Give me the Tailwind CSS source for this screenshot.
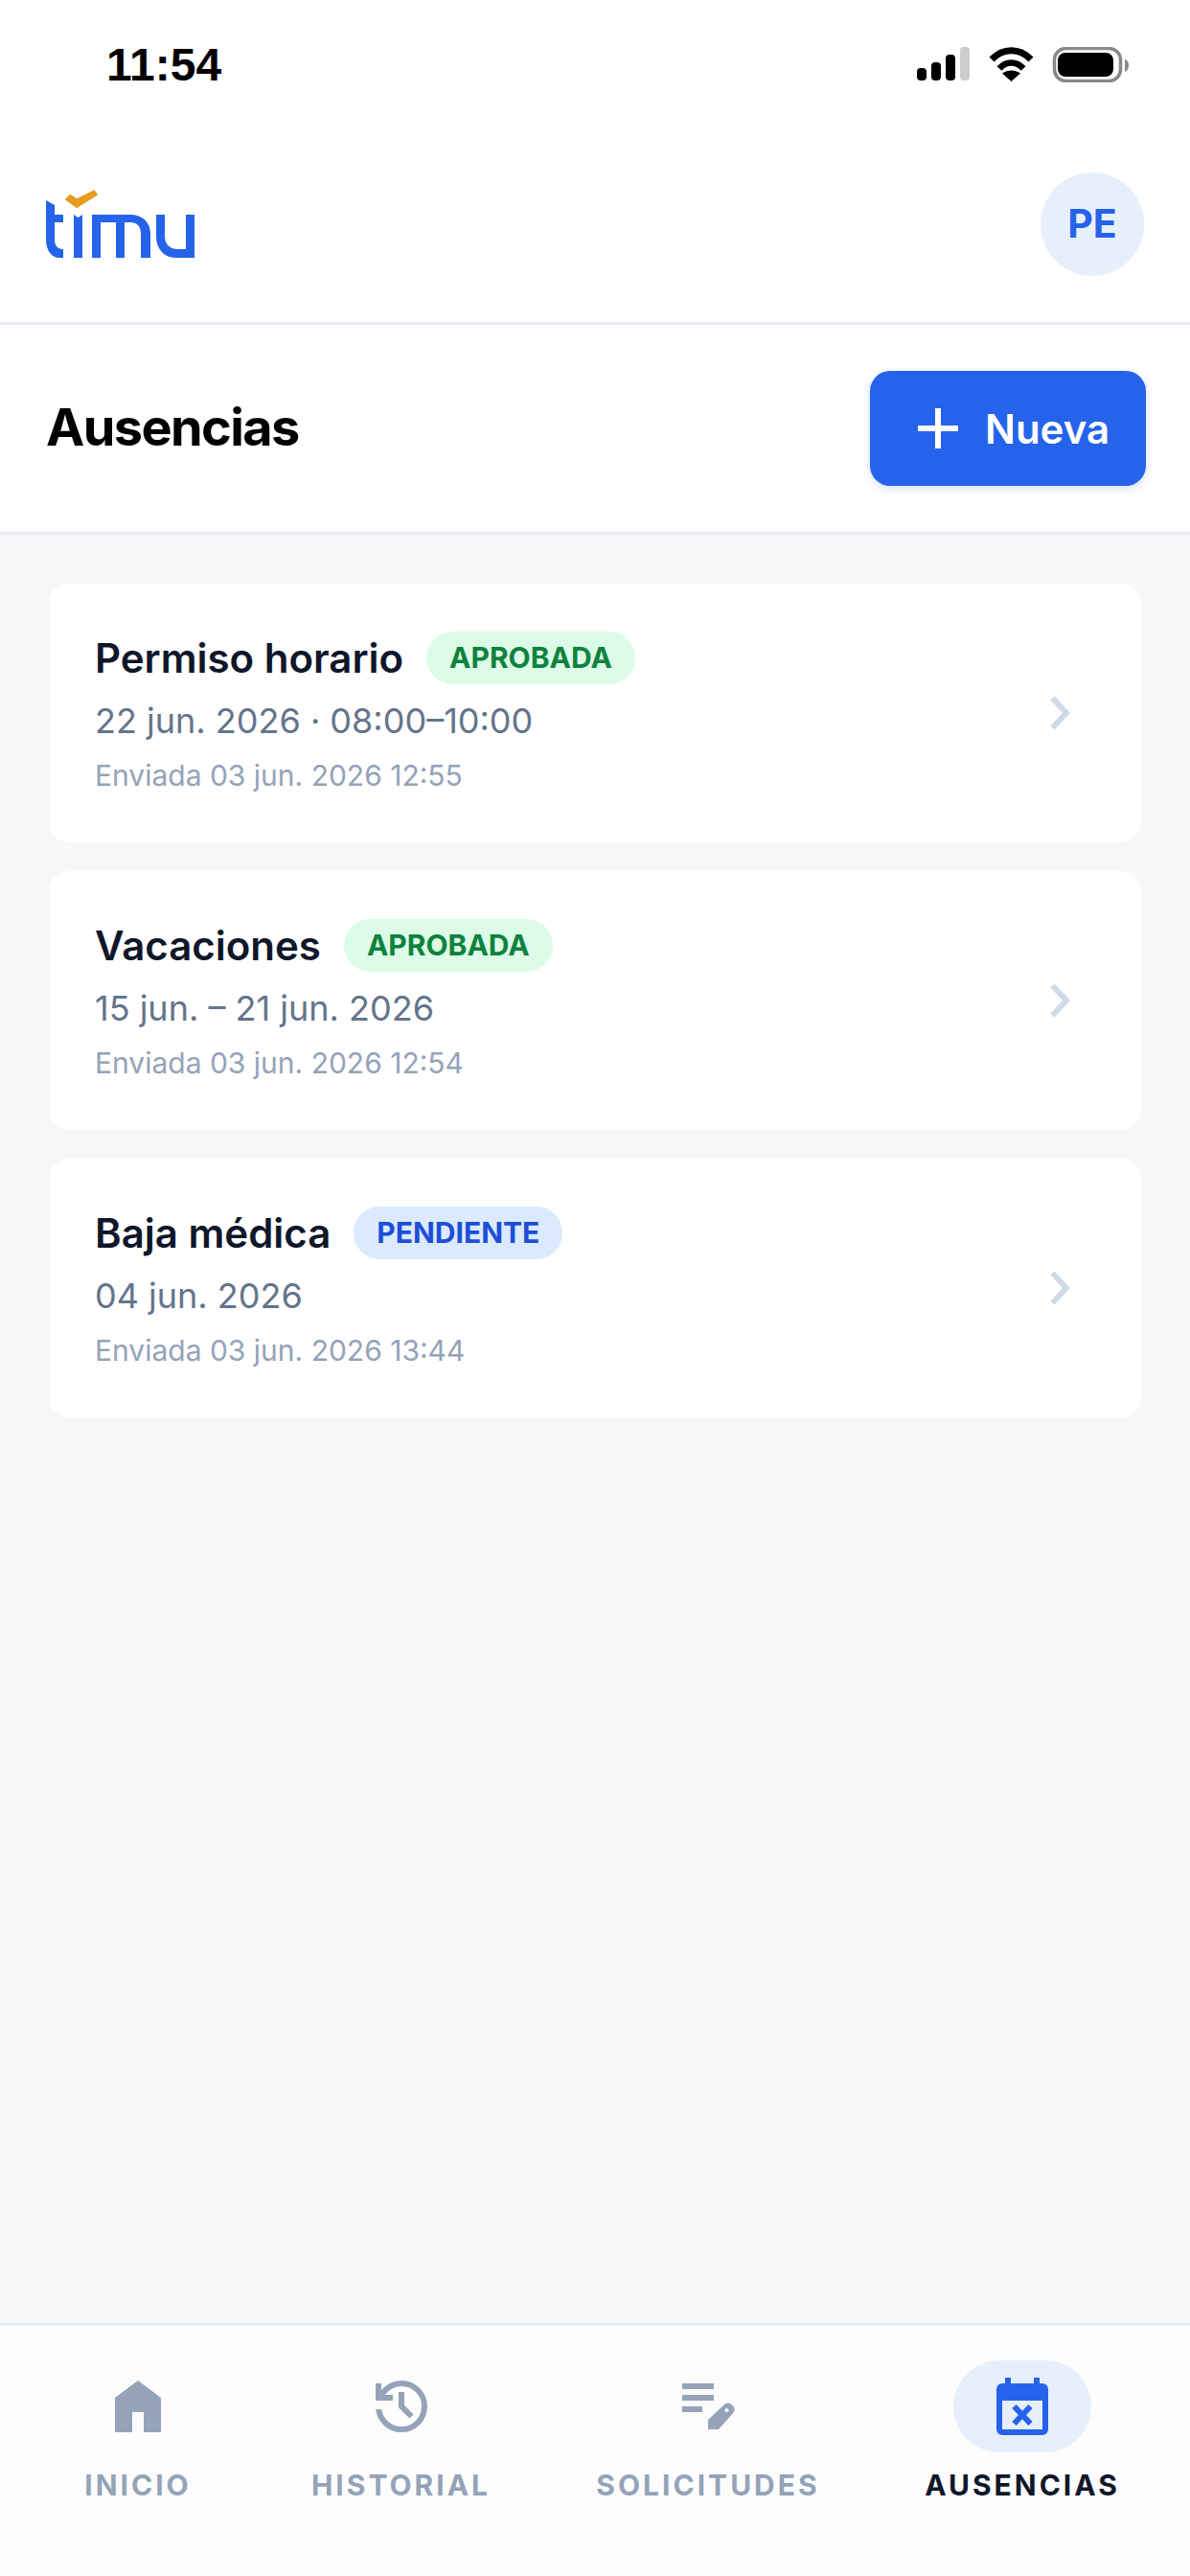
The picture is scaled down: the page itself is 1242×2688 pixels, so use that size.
<!DOCTYPE html>
<html lang="en">
  <head>
    <meta charset="UTF-8" />
    <meta name="viewport" content="width=device-width, initial-scale=1.0" />
    <title>Ausencias</title>
    <script src="https://cdn.jsdelivr.net/npm/@tailwindcss/browser@4"></script>
  </head>
  <body class="bg-[#f6f7f9] font-['Inter',sans-serif]">
    <div class="w-[1242px] h-[2688px] flex flex-col overflow-hidden">
      <!-- status bar -->
      <div class="h-[136px] bg-white flex justify-between pl-[111px] pr-[64px] pt-[40px] shrink-0">
        <span class="font-['Liberation_Sans',sans-serif] font-bold text-[48px] leading-[56px] text-black">11:54</span>
        <svg class="mt-[9px]" width="221" height="37" viewBox="0 0 221 37">
          <rect x="0" y="22" width="10" height="13" rx="4" fill="#000" />
          <rect x="15" y="16" width="10" height="19" rx="4" fill="#000" />
          <rect x="30" y="8" width="10" height="27" rx="4" fill="#000" />
          <rect x="45" y="0" width="10" height="35" rx="4" fill="#ccc" />
          <path d="M78 13 C90 0.500 107 0.500 119 13" fill="none" stroke="#000" stroke-width="7" />
          <path d="M86 22.500 C93 14.500 104 14.500 111 22.500" fill="none" stroke="#000" stroke-width="6.500" />
          <path d="M98.500 36 L89 27.500 C95 23.500 102 23.500 108 27.500 Z" fill="#000" />
          <rect x="143.500" y="1.500" width="69" height="34" rx="12" fill="none" stroke="#888" stroke-width="3.500" />
          <rect x="147" y="6" width="58" height="25" rx="8" fill="#000" />
          <path d="M217 13 C220 14 221 16 221 19 C221 22 220 25 217 26 Z" fill="#888" />
        </svg>
      </div>

      <!-- top bar -->
      <div class="h-[203px] bg-white border-b-[3px] border-[#e7ebf2] flex items-center justify-between pl-[48px] pr-[48px] pb-[4px] shrink-0">
        <svg width="156" height="72" viewBox="0 0 156 72">
          <path d="M0 11 L9 16 V26 H18 V34 H9 V52 C9 58 12 62 18 62 V71 H14 C5 71 0 62 0 52 Z" fill="#2563eb" />
          <path d="M29 26 L33.500 29 L38 26 V71 H29 Z" fill="#2563eb" />
          <path d="M48 26 H88 C101 26 109 34 109 46 V71 H99 V46 C99 38 95 34 88 34 H82 V71 H73 V34 H57 V71 H48 Z" fill="#2563eb" />
          <path d="M115 26 H124 V48 C124 57 129 62 138 62 H146 V26 H155 V71 H136 C123 71 115 62 115 48 Z" fill="#2563eb" />
          <path d="M19.700 10 L25.300 4.700 L32 9.300 L50.300 0.300 L54.300 5.300 L32 19.300 Z" fill="#e8991f" />
        </svg>
        <div class="w-[108px] h-[108px] rounded-full bg-[#e8effc] flex items-center justify-center text-[#2563eb] text-[41px] font-bold">PE</div>
      </div>

      <!-- page header -->
      <div class="h-[219px] bg-white border-b-[3px] border-[#e7ebf2] flex items-center justify-between pl-[48px] pr-[46px] shrink-0">
        <h1 class="text-[54px] font-bold text-black tracking-[-1.6px] pb-[4px]">Ausencias</h1>
        <button class="w-[288px] h-[120px] rounded-[21px] bg-[#2563eb] shadow-[0_3px_8px_rgba(37,99,235,0.2)] text-white flex items-center pl-[50px] gap-[28px] text-[42px] font-semibold">
          <svg width="42" height="42" viewBox="0 0 42 42"><path d="M21 0 V42 M0 21 H42" stroke="#fff" stroke-width="6" fill="none" /></svg>
          Nueva
        </button>
      </div>

      <!-- list -->
      <div class="flex-1 flex flex-col gap-[30px] pt-[51px] pl-[51px] pr-[51px]">
        <div class="h-[270px] bg-white rounded-[21px] pl-[48px] pr-[74px] flex items-center justify-between">
          <div class="flex flex-col">
            <div class="flex items-center gap-[24px] h-[57px] pb-[3px]">
              <span class="text-[42px] font-semibold text-[#0f172a]">Permiso horario</span>
              <span class="h-[55px] px-[24px] rounded-full bg-[#dcfce7] text-[#0e823e] text-[30px] font-bold flex items-center">APROBADA</span>
            </div>
            <div class="text-[36px] leading-[50px] mt-[10px] text-[#64748b]">22 jun. 2026 · 08:00–10:00</div>
            <div class="text-[30px] leading-[40px] mt-[12px] text-[#94a3b8]">Enviada 03 jun. 2026 12:55</div>
          </div>
          <svg width="22" height="36" viewBox="0 0 22 36"><path d="M3.500 2.500 L18 18 L3.500 33.500" stroke="#d0d9e6" stroke-width="6" fill="none" /></svg>
        </div>
        <div class="h-[270px] bg-white rounded-[21px] pl-[48px] pr-[74px] flex items-center justify-between">
          <div class="flex flex-col">
            <div class="flex items-center gap-[24px] h-[57px] pb-[3px]">
              <span class="text-[42px] font-semibold text-[#0f172a]">Vacaciones</span>
              <span class="h-[55px] px-[24px] rounded-full bg-[#dcfce7] text-[#0e823e] text-[30px] font-bold flex items-center">APROBADA</span>
            </div>
            <div class="text-[36px] leading-[50px] mt-[10px] text-[#64748b]">15 jun. – 21 jun. 2026</div>
            <div class="text-[30px] leading-[40px] mt-[12px] text-[#94a3b8]">Enviada 03 jun. 2026 12:54</div>
          </div>
          <svg width="22" height="36" viewBox="0 0 22 36"><path d="M3.500 2.500 L18 18 L3.500 33.500" stroke="#d0d9e6" stroke-width="6" fill="none" /></svg>
        </div>
        <div class="h-[270px] bg-white rounded-[21px] pl-[48px] pr-[74px] flex items-center justify-between">
          <div class="flex flex-col">
            <div class="flex items-center gap-[24px] h-[57px] pb-[3px]">
              <span class="text-[42px] font-semibold text-[#0f172a]">Baja médica</span>
              <span class="h-[55px] px-[24px] rounded-full bg-[#dbeafe] text-[#1d4ed8] text-[30px] font-bold flex items-center">PENDIENTE</span>
            </div>
            <div class="text-[36px] leading-[50px] mt-[10px] text-[#64748b]">04 jun. 2026</div>
            <div class="text-[30px] leading-[40px] mt-[12px] text-[#94a3b8]">Enviada 03 jun. 2026 13:44</div>
          </div>
          <svg width="22" height="36" viewBox="0 0 22 36"><path d="M3.500 2.500 L18 18 L3.500 33.500" stroke="#d0d9e6" stroke-width="6" fill="none" /></svg>
        </div>
      </div>

      <!-- tab bar -->
      <div class="h-[264px] bg-[#fdfdfe] border-t-[3px] border-[#e7ebf2] shrink-0 flex text-[30px] font-bold tracking-[3px] text-[#94a3b8]">
        <div class="w-[288px] flex flex-col items-center pt-[36px]">
          <div class="h-[96px] flex items-center justify-center">
            <svg width="48" height="54" viewBox="0 0 48 54"><path d="M24 0 L48 18 V54 H30 V33 H18 V54 H0 V18 Z" fill="#94a3b8" /></svg>
          </div>
          <span class="mt-[12px]">INICIO</span>
        </div>
        <div class="w-[261px] flex flex-col items-center pt-[36px]">
          <div class="h-[96px] flex items-center justify-center">
            <svg width="54" height="54" viewBox="3 3 18 18">
              <path d="M12 21q-3.450 0-6.010-2.290T3.050 13H5.100q.350 2.600 2.310 4.300T12 19q2.925 0 4.963-2.037T19 12q0-2.925-2.037-4.962T12 5q-1.725 0-3.225.8T6.250 8H9v2H3V4h2v2.350q1.275-1.600 3.113-2.475T12 3q3.750 0 6.375 2.625T21 12q0 3.750-2.625 6.375T12 21Zm2.800-4.800L11 12.400V7h2v4.600l3.200 3.200l-1.400 1.400Z" fill="#94a3b8" />
            </svg>
          </div>
          <span class="mt-[12px]">HISTORIAL</span>
        </div>
        <div class="w-[380px] flex flex-col items-center pt-[36px]">
          <div class="h-[96px] flex items-center justify-center">
            <svg width="55" height="48" viewBox="0 0 55 48">
              <path d="M0 0 H33 V6 H0 Z M0 12 H33 V18 H0 Z M0 24 H21 V30 H0 Z" fill="#94a3b8" />
              <path fill-rule="evenodd" d="M27 38 L44 22 C46 20.500 49 20 51 21.500 L53 23.500 C55 25.500 55 28.500 53.500 30.500 L38 48 H27 Z M46.500 25.500 L49 28 L46.500 30.500 L44 28 Z" fill="#94a3b8" />
            </svg>
          </div>
          <span class="mt-[12px]">SOLICITUDES</span>
        </div>
        <div class="w-[276px] flex flex-col items-center pt-[36px] text-[#0f172a]">
          <div class="w-[144px] h-[96px] rounded-full bg-[#e8effc] flex items-center justify-center">
            <svg width="54" height="60" viewBox="0 0 54 60">
              <path fill-rule="evenodd" d="M9 0 H15 V6 H39 V0 H45 V6 H48 A6 6 0 0 1 54 12 V54 A6 6 0 0 1 48 60 H6 A6 6 0 0 1 0 54 V12 A6 6 0 0 1 6 6 H9 Z M6 24 V54 H48 V24 Z" fill="#2563eb" />
              <path d="M18.500 30 L35.500 48 M35.500 30 L18.500 48" stroke="#2563eb" stroke-width="6" fill="none" />
            </svg>
          </div>
          <span class="mt-[12px]">AUSENCIAS</span>
        </div>
      </div>
    </div>
  </body>
</html>
